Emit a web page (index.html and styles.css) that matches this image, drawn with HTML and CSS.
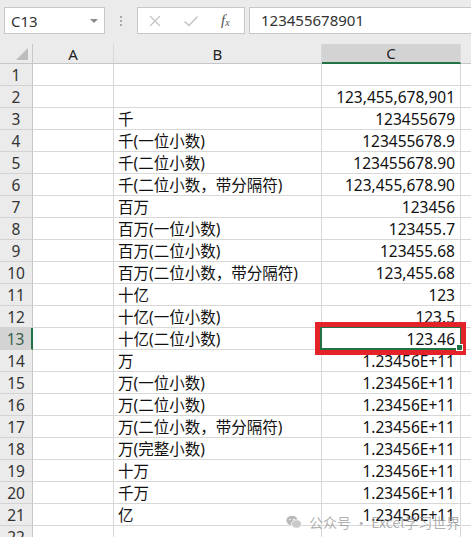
FILE: index.html
```html
<!DOCTYPE html>
<html lang="zh-CN">
<head>
    <meta charset="UTF-8">
    <title>数字格式</title>
    <link rel="stylesheet" href="styles.css">
</head>
<body>
    <div class="app">
        <!-- name box + formula bar -->
        <div class="formula-bar">
            <div class="name-box">
                <span>C13</span>
                <span class="caret"></span>
            </div>
            <div class="grip">
                <i></i><i></i><i></i>
            </div>
            <div class="fx-buttons">
                <svg class="btn" width="14" height="14" viewBox="0 0 14 14">
                    <path d="M2 2 L12 12 M12 2 L2 12" stroke="#c4c4c4" stroke-width="1.3" fill="none"/>
                </svg>
                <svg class="btn" width="16" height="14" viewBox="0 0 16 14">
                    <path d="M1.5 7.5 L6 11.5 L14.5 2.5" stroke="#c4c4c4" stroke-width="1.4" fill="none"/>
                </svg>
                <span class="fx">f<sub>x</sub></span>
            </div>
            <div class="formula-input">123455678901</div>
        </div>

        <div class="sheet">
            <div class="corner"><span class="tri"></span></div>
            <div class="col-head">A</div>
            <div class="col-head">B</div>
            <div class="col-head active">C</div>
            <div class="col-head rest"></div>

            <div class="row-head">1</div><div class="cell"></div><div class="cell"></div><div class="cell num"></div><div class="cell rest"></div>
            <div class="row-head">2</div><div class="cell"></div><div class="cell"></div><div class="cell num">123,455,678,901</div><div class="cell rest"></div>
            <div class="row-head">3</div><div class="cell"></div><div class="cell">千</div><div class="cell num">123455679</div><div class="cell rest"></div>
            <div class="row-head">4</div><div class="cell"></div><div class="cell">千(一位小数)</div><div class="cell num">123455678.9</div><div class="cell rest"></div>
            <div class="row-head">5</div><div class="cell"></div><div class="cell">千(二位小数)</div><div class="cell num">123455678.90</div><div class="cell rest"></div>
            <div class="row-head">6</div><div class="cell"></div><div class="cell">千(二位小数，带分隔符)</div><div class="cell num">123,455,678.90</div><div class="cell rest"></div>
            <div class="row-head">7</div><div class="cell"></div><div class="cell">百万</div><div class="cell num">123456</div><div class="cell rest"></div>
            <div class="row-head">8</div><div class="cell"></div><div class="cell">百万(一位小数)</div><div class="cell num">123455.7</div><div class="cell rest"></div>
            <div class="row-head">9</div><div class="cell"></div><div class="cell">百万(二位小数)</div><div class="cell num">123455.68</div><div class="cell rest"></div>
            <div class="row-head">10</div><div class="cell"></div><div class="cell">百万(二位小数，带分隔符)</div><div class="cell num">123,455.68</div><div class="cell rest"></div>
            <div class="row-head">11</div><div class="cell"></div><div class="cell">十亿</div><div class="cell num">123</div><div class="cell rest"></div>
            <div class="row-head">12</div><div class="cell"></div><div class="cell">十亿(一位小数)</div><div class="cell num">123.5</div><div class="cell rest"></div>
            <div class="row-head active">13</div><div class="cell"></div><div class="cell">十亿(二位小数)</div><div class="cell num selected">123.46</div><div class="cell rest"></div>
            <div class="row-head">14</div><div class="cell"></div><div class="cell">万</div><div class="cell num">1.23456E+11</div><div class="cell rest"></div>
            <div class="row-head">15</div><div class="cell"></div><div class="cell">万(一位小数)</div><div class="cell num">1.23456E+11</div><div class="cell rest"></div>
            <div class="row-head">16</div><div class="cell"></div><div class="cell">万(二位小数)</div><div class="cell num">1.23456E+11</div><div class="cell rest"></div>
            <div class="row-head">17</div><div class="cell"></div><div class="cell">万(二位小数，带分隔符)</div><div class="cell num">1.23456E+11</div><div class="cell rest"></div>
            <div class="row-head">18</div><div class="cell"></div><div class="cell">万(完整小数)</div><div class="cell num">1.23456E+11</div><div class="cell rest"></div>
            <div class="row-head">19</div><div class="cell"></div><div class="cell">十万</div><div class="cell num">1.23456E+11</div><div class="cell rest"></div>
            <div class="row-head">20</div><div class="cell"></div><div class="cell">千万</div><div class="cell num">1.23456E+11</div><div class="cell rest"></div>
            <div class="row-head">21</div><div class="cell"></div><div class="cell">亿</div><div class="cell num">1.23456E+11</div><div class="cell rest"></div>
            <div class="row-head">22</div><div class="cell"></div><div class="cell"></div><div class="cell num"></div><div class="cell rest"></div>

            <!-- red mark around C13 -->
            <div class="mark"></div>

            <div class="watermark">
                <svg width="16" height="14" viewBox="0 0 16 14">
                    <ellipse cx="6" cy="5.5" rx="5.6" ry="4.8" fill="#b9b9b9"/>
                    <ellipse cx="10.5" cy="9" rx="5" ry="4.2" fill="#c9c9c9" stroke="#fff" stroke-width="0.8"/>
                    <circle cx="4" cy="4.5" r="0.8" fill="#fff"/>
                    <circle cx="7.6" cy="4.5" r="0.8" fill="#fff"/>
                </svg>
                <span>公众号 · Excel学习世界</span>
            </div>
        </div>
    </div>
</body>
</html>
```

FILE: styles.css
```css
body {
    margin: 0;
    background-color: #fff;
    font-family: "Noto Sans", "Noto Sans CJK SC", sans-serif;
    overflow: hidden;
}

.app {
    width: 471px;
    height: 537px;
    overflow: hidden;
}

/* top bar */
.formula-bar {
    height: 44px;
    background-color: #ebebeb;
    display: flex;
    align-items: flex-start;
    padding-top: 7px;
    padding-left: 4px;
    box-sizing: border-box;
}

.name-box {
    width: 101px;
    height: 27px;
    box-sizing: border-box;
    background-color: #fff;
    border: 1px solid #c8c8c8;
    display: flex;
    align-items: center;
    justify-content: space-between;
    padding: 0 6px 0 6px;
    font-size: 15px;
    color: #333;
}

.caret {
    width: 0;
    height: 0;
    border-left: 4px solid transparent;
    border-right: 4px solid transparent;
    border-top: 4px solid #8a8a8a;
    margin-top: 1px;
}

.grip {
    width: 32px;
    height: 27px;
    display: flex;
    flex-direction: column;
    align-items: center;
    justify-content: center;
    gap: 2px;
}

.grip i {
    width: 2px;
    height: 2px;
    background-color: #a8a8a8;
}

.fx-buttons {
    width: 108px;
    height: 27px;
    box-sizing: border-box;
    background-color: #fff;
    border: 1px solid #c8c8c8;
    display: flex;
    align-items: center;
    padding-left: 10px;
    gap: 21px;
}

.fx {
    font-family: "Liberation Serif", serif;
    font-style: italic;
    font-size: 15px;
    color: #555;
    margin-left: 1px;
}

.fx sub {
    font-size: 10px;
    vertical-align: -1px;
}

.formula-input {
    flex: 1;
    height: 27px;
    margin-left: 4px;
    box-sizing: border-box;
    background-color: #fff;
    border: 1px solid #c8c8c8;
    border-right: none;
    padding-left: 11px;
    font-size: 15px;
    line-height: 25px;
    color: #333;
}

/* grid */
.sheet {
    position: relative;
    display: grid;
    grid-template-columns: 33px 81px 208px 139px 1fr;
    grid-template-rows: 20px repeat(22, 22px);
    font-size: 15.5px;
    color: #111;
}

.corner,
.col-head {
    background-color: #ebebeb;
    border-bottom: 1px solid #c6c6c6;
    border-right: 1px solid #d8d8d8;
    box-sizing: border-box;
}

.corner {
    position: relative;
    border-right: 1px solid #c6c6c6;
}

.tri {
    position: absolute;
    right: 4px;
    bottom: 3px;
    width: 0;
    height: 0;
    border-left: 12px solid transparent;
    border-bottom: 12px solid #bcbcbc;
}

.col-head {
    text-align: center;
    font-size: 15px;
    line-height: 20px;
    color: #222;
}

.col-head.active {
    background-color: #d3d3d3;
    border-bottom: 2px solid #217346;
    line-height: 19px;
}

.col-head.rest {
    border-right: none;
}

.row-head {
    background-color: #ebebeb;
    border-right: 1px solid #c6c6c6;
    border-bottom: 1px solid #d2d2d2;
    box-sizing: border-box;
    text-align: center;
    font-size: 15.5px;
    line-height: 22px;
    color: #333;
}

.row-head.active {
    background-color: #d3d3d3;
    border-right: 2px solid #217346;
    color: #3a5f4b;
}

.cell {
    border-right: 1px solid #d8d8d8;
    border-bottom: 1px solid #d8d8d8;
    box-sizing: border-box;
    padding: 1px 4px 0 4px;
    line-height: 21px;
    white-space: nowrap;
}

.cell.num {
    text-align: right;
    padding-right: 5px;
}

.cell.rest {
    border-right: none;
}

.cell.selected {
    position: relative;
}

.cell.selected::after {
    content: "";
    position: absolute;
    left: -2px;
    top: -2px;
    right: -2px;
    bottom: -1px;
    border: 2px solid #217346;
}

.cell.selected::before {
    content: "";
    position: absolute;
    right: -3px;
    bottom: -2px;
    width: 5px;
    height: 5px;
    background-color: #217346;
    border: 1px solid #fff;
    z-index: 1;
}

.mark {
    position: absolute;
    left: 315px;
    top: 278px;
    width: 151px;
    height: 33px;
    box-sizing: border-box;
    border: 5px solid #e4222a;
}

.watermark {
    position: absolute;
    left: 286px;
    top: 468px;
    display: flex;
    align-items: center;
    gap: 7px;
    white-space: nowrap;
    font-family: "Noto Sans CJK SC", sans-serif;
    font-size: 14px;
    color: rgba(150, 150, 150, 0.75);
}
```
